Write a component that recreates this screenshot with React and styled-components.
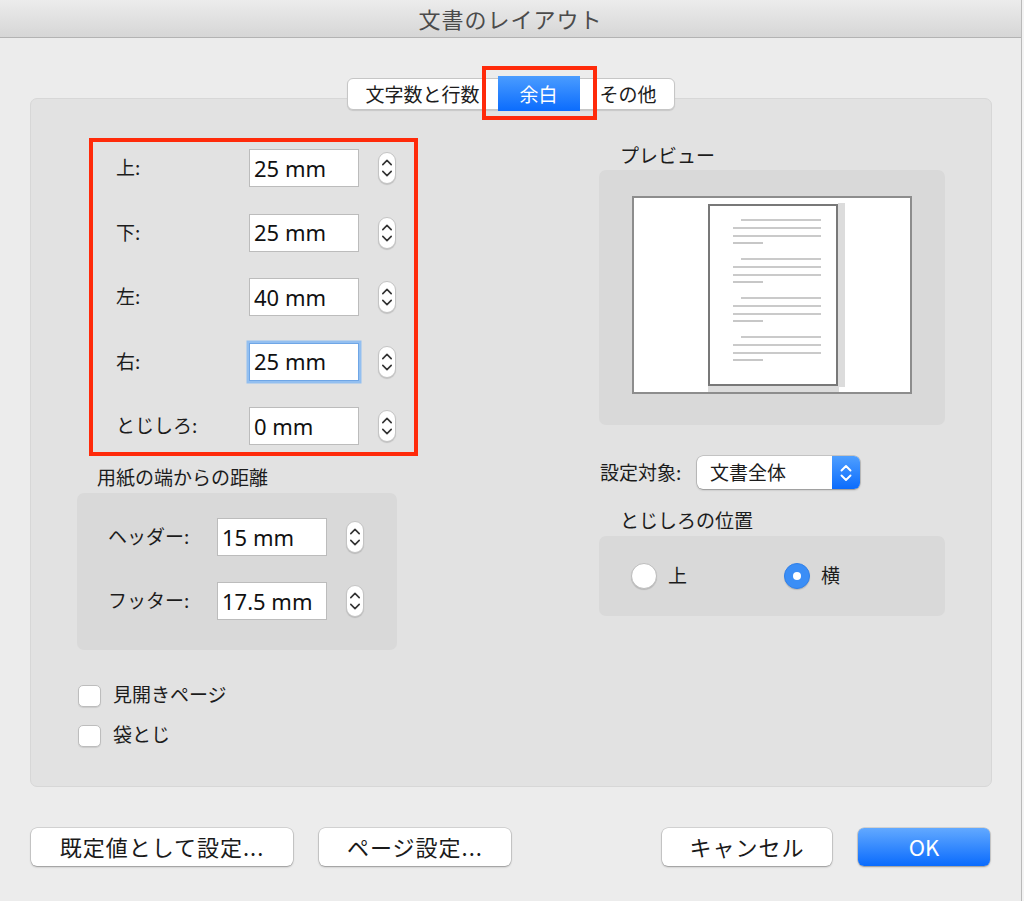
import React from "react";
import styled, { createGlobalStyle } from "styled-components";

const Global = createGlobalStyle`
  html, body { margin: 0; padding: 0; background: #f3f3f3; }
  body { font-family: "Noto Sans", "Noto Sans CJK JP", sans-serif; color: #1c1c1c; }
  * { box-sizing: border-box; }
`;

const Window = styled.div`
  width: 1022px;
  height: 901px;
  background: #ececec;
  border-right: 1px solid #b9b9b9;
  display: flex;
  flex-direction: column;
`;

const TitleBar = styled.div`
  height: 38px;
  flex: none;
  background: linear-gradient(#ececec, #d6d6d6);
  border-bottom: 1px solid #b3b3b3;
  display: flex;
  align-items: center;
  justify-content: center;
  font-family: "Noto Sans CJK JP", sans-serif;
  font-size: 22px;
  letter-spacing: 1px;
  color: #4b4b4b;
  padding-bottom: 2px;
`;

const Body = styled.div`
  padding: 40px 29px 0 30px;
  display: flex;
  flex-direction: column;
`;

const TabBar = styled.div`
  align-self: center;
  margin-left: -1px;
  display: flex;
  height: 32px;
  margin-bottom: -12px;
  position: relative;
  z-index: 2;
  background: #fff;
  border: 1px solid #c6c6c6;
  border-radius: 6px;
  box-shadow: 0 1px 1px rgba(0,0,0,0.12);
  font-family: "Noto Sans CJK JP", sans-serif;
  font-size: 19px;
`;

const Segment = styled.div`
  width: ${(p) => p.$w}px;
  display: flex;
  align-items: center;
  justify-content: ${(p) => p.$align || "center"};
  padding: 0 ${(p) => p.$pad || 0}px 2px;
  line-height: 1;
`;

const Highlight = styled.div`
  width: 82px;
  align-self: stretch;
  margin: -3px 0 -4px 6px;
  background: linear-gradient(#4a9cff, #0b6cfd);
  color: #fff;
  display: flex;
  align-items: center;
  justify-content: center;
`;

const Annotation = styled.div`
  position: absolute;
  left: 134px;
  top: -13px;
  width: 115px;
  height: 54px;
  border: 4px solid #ff2a0a;
  pointer-events: none;
`;

const Panel = styled.div`
  height: 689px;
  background: #e2e2e2;
  border: 1px solid #d7d7d7;
  border-radius: 7px;
  display: grid;
  grid-template-columns: 522px 346px;
  padding-left: 46px;
`;

const LeftCol = styled.div`
  padding-top: 39px;
  display: flex;
  flex-direction: column;
`;

const RightCol = styled.div`
  padding-top: 43px;
  display: flex;
  flex-direction: column;
`;

const MarginBox = styled.div`
  margin-left: 12px;
  width: 329px;
  border: 4px solid #ff2a0a;
  padding: 7px 0 7px 23px;
  display: flex;
  flex-direction: column;
  gap: 26.5px;
`;

const Row = styled.div`
  display: flex;
  align-items: center;
  height: 38px;
`;

const Label = styled.div`
  width: ${(p) => p.$w}px;
  font-family: "Noto Sans CJK JP", sans-serif;
  font-size: 19px;
  line-height: 1;
  padding-bottom: 3px;
`;

const Field = styled.div`
  width: 110px;
  height: 38px;
  background: #fff;
  border: 1px solid ${(p) => (p.$focus ? "#6fa6e6" : "#bcbcbc")};
  box-shadow: ${(p) => (p.$focus ? "0 0 0 2.5px #93bff0" : "none")};
  display: flex;
  align-items: center;
  padding: 0 0 1px 4px;
  font-family: "Noto Sans", sans-serif;
  font-size: 22px;
  color: #111;
`;

const StepperWrap = styled.div`
  margin-left: 19px;
  width: 18px;
  height: 32px;
  border-radius: 9px;
  background: #fff;
  border: 1px solid #c4c4c4;
  box-shadow: 0 1px 1px rgba(0,0,0,0.15);
  display: flex;
`;

const Stepper = () => (
  <StepperWrap>
    <svg width="16" height="30" viewBox="0 0 16 30">
      <path d="M3.8 11.6 L8 7.4 L12.2 11.6" fill="none" stroke="#333" strokeWidth="1.6" strokeLinecap="round" strokeLinejoin="round" />
      <path d="M3.8 18.4 L8 22.6 L12.2 18.4" fill="none" stroke="#333" strokeWidth="1.6" strokeLinecap="round" strokeLinejoin="round" />
    </svg>
  </StepperWrap>
);

const GroupTitle = styled.div`
  height: 28px;
  display: flex;
  align-items: center;
  margin-top: ${(p) => p.$mt || 0}px;
  padding-left: ${(p) => p.$pl}px;
  padding-bottom: 3px;
  font-family: "Noto Sans CJK JP", sans-serif;
  font-size: 19px;
`;

const GroupBox = styled.div`
  width: ${(p) => p.$w}px;
  height: ${(p) => p.$h}px;
  background: #d9d9d9;
  border-radius: 7px;
  margin-top: ${(p) => p.$mt || 0}px;
`;

const DistanceBox = styled(GroupBox)`
  padding: 25px 0 0 31px;
  display: flex;
  flex-direction: column;
  gap: 26px;
`;

const Checks = styled.div`
  margin-top: 35px;
  padding-left: 1px;
  display: flex;
  flex-direction: column;
  gap: 18px;
`;

const CheckRow = styled.label`
  display: flex;
  align-items: center;
  gap: 12px;
  height: 22px;
  font-family: "Noto Sans CJK JP", sans-serif;
  font-size: 19px;
`;

const CheckText = styled.span`
  line-height: 1;
  padding-bottom: 6px;
`;

const CheckBox = styled.span`
  width: 23px;
  height: 22px;
  background: #fff;
  border: 1px solid #bdbdbd;
  border-radius: 5px;
  box-shadow: 0 1px 1px rgba(0,0,0,0.1);
`;

const PreviewBox = styled(GroupBox)`
  padding: 26px 0 0 33px;
`;

const SelectRow = styled.div`
  margin-top: 31px;
  display: flex;
  align-items: center;
  height: 33px;
  padding-left: 1px;
`;

const Select = styled.div`
  width: 163px;
  height: 33px;
  display: flex;
  border-radius: 6px;
  background: #fff;
  box-shadow: 0 0 0 0.5px rgba(0,0,0,0.25), 0 1px 2px rgba(0,0,0,0.25);
  overflow: hidden;
  font-family: "Noto Sans CJK JP", sans-serif;
  font-size: 19px;
`;

const SelectText = styled.div`
  flex: 1;
  display: flex;
  align-items: center;
  padding: 0 0 3px 13px;
`;

const SelectArrow = styled.div`
  width: 28px;
  background: linear-gradient(#4f9fff, #0b6cfd);
  display: flex;
  align-items: center;
  justify-content: center;
`;

const RadioBox = styled(GroupBox)`
  display: flex;
  align-items: center;
  padding-left: 32px;
`;

const RadioOption = styled.div`
  width: ${(p) => p.$w || "auto"};
  display: flex;
  align-items: center;
  gap: 11px;
  font-family: "Noto Sans CJK JP", sans-serif;
  font-size: 19px;
`;

const RadioText = styled.span`
  line-height: 1;
  padding-bottom: 4px;
`;

const RadioDot = styled.span`
  width: 26px;
  height: 26px;
  border-radius: 50%;
  background: ${(p) => (p.$on ? "#3b8ef6" : "#fff")};
  border: 1px solid ${(p) => (p.$on ? "#2f80ea" : "#bdbdbd")};
  box-shadow: 0 1px 1px rgba(0,0,0,0.15);
  display: flex;
  align-items: center;
  justify-content: center;
  &::after {
    content: "";
    display: ${(p) => (p.$on ? "block" : "none")};
    width: 8px;
    height: 8px;
    border-radius: 50%;
    background: #fff;
  }
`;

const ButtonRow = styled.div`
  margin-top: 41px;
  padding: 0 2px 0 1px;
  display: flex;
  justify-content: space-between;
`;

const ButtonGroup = styled.div`
  display: flex;
  gap: 26px;
`;

const Button = styled.button`
  width: ${(p) => p.$w}px;
  height: 38px;
  border-radius: 6px;
  border: none;
  background: ${(p) => (p.$primary ? "linear-gradient(#62a9ff, #0a6bfd)" : "#fff")};
  color: ${(p) => (p.$primary ? "#fff" : "#1a1a1a")};
  box-shadow: 0 0 0 0.5px rgba(0,0,0,0.2), 0 1px 2px rgba(0,0,0,0.3);
  font-family: "Noto Sans CJK JP", sans-serif;
  font-size: 22px;
  letter-spacing: ${(p) => (p.$primary ? 0 : 1)}px;
  padding: 0 0 3px;
`;

const PreviewImage = () => {
  const paras = [24, 63, 102, 141];
  return (
    <svg width="280" height="198" viewBox="0 0 280 198">
      <rect x="1" y="1" width="278" height="196" fill="#fff" stroke="#8d8d8d" strokeWidth="2" />
      <rect x="206" y="7" width="7" height="184" fill="#dcdcdc" />
      <rect x="76" y="190" width="131" height="6" fill="#dcdcdc" />
      <rect x="77" y="9" width="128" height="180" fill="#fff" stroke="#787878" strokeWidth="2" />
      {paras.map((y) => (
        <g key={y} stroke="#b9b9b9" strokeWidth="1.6">
          <line x1="109" y1={y} x2="189" y2={y} />
          <line x1="101" y1={y + 8} x2="189" y2={y + 8} />
          <line x1="101" y1={y + 16} x2="189" y2={y + 16} />
          <line x1="101" y1={y + 23} x2="131" y2={y + 23} />
        </g>
      ))}
    </svg>
  );
};

const margins = [
  { label: "上:", value: "25 mm" },
  { label: "下:", value: "25 mm" },
  { label: "左:", value: "40 mm" },
  { label: "右:", value: "25 mm", focus: true },
  { label: "とじしろ:", value: "0 mm" },
];

export default function App() {
  return (
    <>
      <Global />
      <Window>
        <TitleBar>文書のレイアウト</TitleBar>
        <Body>
          <TabBar>
            <Segment $w={144} $align="flex-end" $pad={12}>文字数と行数</Segment>
            <Segment $w={106} $align="flex-start">
              <Highlight>余白</Highlight>
            </Segment>
            <Segment $w={76} $align="flex-start" $pad={2}>その他</Segment>
            <Annotation />
          </TabBar>
          <Panel>
            <LeftCol>
              <MarginBox>
                {margins.map((m) => (
                  <Row key={m.label}>
                    <Label $w={133}>{m.label}</Label>
                    <Field $focus={m.focus}>{m.value}</Field>
                    <Stepper />
                  </Row>
                ))}
              </MarginBox>
              <GroupTitle $mt={8} $pl={20}>用紙の端からの距離</GroupTitle>
              <DistanceBox $w={320} $h={157} $mt={1}>
                <Row>
                  <Label $w={109}>ヘッダー:</Label>
                  <Field>15 mm</Field>
                  <Stepper />
                </Row>
                <Row>
                  <Label $w={109}>フッター:</Label>
                  <Field>17.5 mm</Field>
                  <Stepper />
                </Row>
              </DistanceBox>
              <Checks>
                <CheckRow><CheckBox /><CheckText>見開きページ</CheckText></CheckRow>
                <CheckRow><CheckBox /><CheckText>袋とじ</CheckText></CheckRow>
              </Checks>
            </LeftCol>
            <RightCol>
              <GroupTitle $pl={21}>プレビュー</GroupTitle>
              <PreviewBox $w={346} $h={255}>
                <PreviewImage />
              </PreviewBox>
              <SelectRow>
                <Label $w={97}>設定対象:</Label>
                <Select>
                  <SelectText>文書全体</SelectText>
                  <SelectArrow>
                    <svg width="16" height="24" viewBox="0 0 16 24">
                      <path d="M3.5 9.5 L8 5 L12.5 9.5" fill="none" stroke="#fff" strokeWidth="1.9" strokeLinecap="round" strokeLinejoin="round" />
                      <path d="M3.5 14.5 L8 19 L12.5 14.5" fill="none" stroke="#fff" strokeWidth="1.9" strokeLinecap="round" strokeLinejoin="round" />
                    </svg>
                  </SelectArrow>
                </Select>
              </SelectRow>
              <GroupTitle $mt={18} $pl={21}>とじしろの位置</GroupTitle>
              <RadioBox $w={346} $h={80} $mt={1}>
                <RadioOption $w="153px"><RadioDot /><RadioText>上</RadioText></RadioOption>
                <RadioOption><RadioDot $on /><RadioText>横</RadioText></RadioOption>
              </RadioBox>
            </RightCol>
          </Panel>
          <ButtonRow>
            <ButtonGroup>
              <Button $w={262}>既定値として設定...</Button>
              <Button $w={192}>ページ設定...</Button>
            </ButtonGroup>
            <ButtonGroup>
              <Button $w={170}>キャンセル</Button>
              <Button $w={132} $primary>OK</Button>
            </ButtonGroup>
          </ButtonRow>
        </Body>
      </Window>
    </>
  );
}
